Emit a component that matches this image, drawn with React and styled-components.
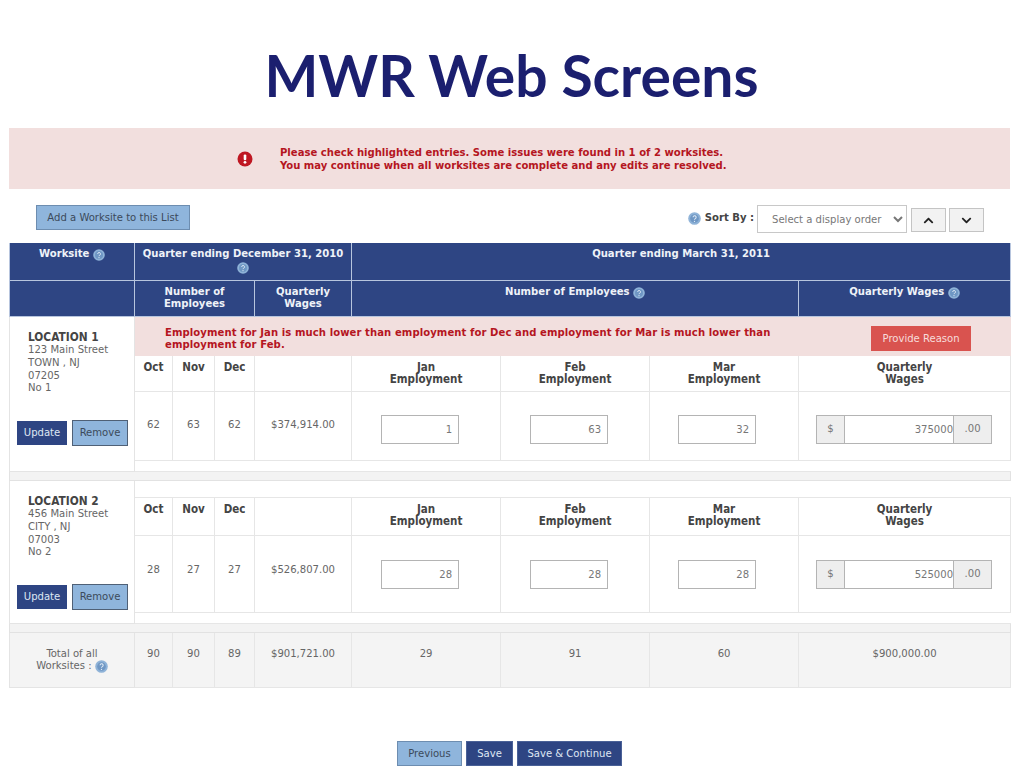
import React from "react";
import styled, { createGlobalStyle } from "styled-components";
import { FaChevronUp, FaChevronDown } from "react-icons/fa";

const GlobalStyle = createGlobalStyle`
  html, body {
    margin: 0;
    padding: 0;
    background: #fff;
  }
  body {
    font-family: "DejaVu Sans Condensed", "DejaVu Sans", sans-serif;
    font-size: 11.2px;
    line-height: 12.7px;
    color: #555;
  }
`;

const Page = styled.div`
  width: 1024px;
  height: 768px;
  overflow: hidden;
  padding: 0 14px 0 9px;
  box-sizing: border-box;
`;

const Title = styled.h1`
  margin: 0;
  height: 128px;
  display: flex;
  align-items: center;
  justify-content: center;
  padding: 22px 0 0 4px;
  box-sizing: border-box;
  font-family: Lato, "Noto Sans", sans-serif;
  font-size: 57px;
  font-weight: 700;
  color: #1b1f6f;
`;

const AlertBanner = styled.div`
  height: 61px;
  background: #f2dfde;
  display: flex;
  align-items: center;
  padding-left: 228px;
  gap: 27px;
  color: #b5161f;
  font-weight: 700;
`;

const AlertText = styled.div`
  padding-top: 3px;
`;

const Toolbar = styled.div`
  height: 54px;
  display: flex;
  align-items: flex-start;
  padding: 16px 26px 0 27px;
  box-sizing: border-box;
`;

const BaseButton = styled.button`
  font: inherit;
  height: 25px;
  padding: 2px 0 0;
  box-sizing: border-box;
  border: 1px solid #6d8db0;
  background: #8fb5dc;
  color: #3c4a5a;
  cursor: pointer;
`;

const AddButton = styled(BaseButton)`
  width: 154px;
`;

const SortGroup = styled.div`
  margin-left: auto;
  display: flex;
  align-items: flex-start;
`;

const SortLabel = styled.span`
  display: flex;
  align-items: center;
  gap: 4px;
  font-weight: 700;
  color: #444;
  margin: 7px 3px 0 0;
`;

const SortSelect = styled.select`
  width: 150px;
  height: 28px;
  font: inherit;
  color: #777;
  background: #fff;
  border: 1px solid #c8c8c8;
  padding-left: 10px;
`;

const ArrowButton = styled.button`
  width: 35px;
  height: 24px;
  margin: 3px 0 0 ${(p) => p.$gap}px;
  padding: 0;
  display: flex;
  align-items: center;
  justify-content: center;
  background: #f2f2f2;
  border: 1px solid #c4c4c4;
  color: #222;
`;

const Grid = styled.table`
  width: 1001px;
  table-layout: fixed;
  border-collapse: collapse;
`;

const HeadCell = styled.th`
  background: #2e4583;
  color: #eef2f8;
  height: ${(p) => p.$h}px;
  padding: 5px 4px 0;
  box-sizing: border-box;
  vertical-align: top;
  text-align: center;
  font-weight: 700;
  border: 1px solid #b7c5de;
  border-top: ${(p) => (p.$first ? "none" : "1px solid #b7c5de")};
`;

const LocationCell = styled.td`
  border: 1px solid #e4e4e4;
  padding: 0;
  vertical-align: top;
`;

const LocationBox = styled.div`
  display: flex;
  flex-direction: column;
  height: ${(p) => p.$h}px;
  box-sizing: border-box;
  padding: ${(p) => p.$top}px 6px 0 7px;
`;

const Address = styled.div`
  padding-left: 11px;
  color: #666;
  strong {
    display: block;
    font-size: 11.8px;
    margin-bottom: 1px;
    color: #444;
  }
`;

const ButtonRow = styled.div`
  margin-top: auto;
  margin-bottom: ${(p) => p.$bottom}px;
  display: flex;
  align-items: center;
  gap: 5px;
`;

const UpdateButton = styled(BaseButton)`
  width: 51px;
  height: 24px;
  background: #2e4583;
  border-color: #2e4583;
  color: #dfe7f3;
`;

const RemoveButton = styled(BaseButton)`
  width: 57px;
  height: 26px;
  border-color: #4f6076;
`;

const WarnCell = styled.td`
  height: 39px;
  box-sizing: border-box;
  padding: 0;
  vertical-align: top;
  background: #f2dfde;
  border: 1px solid #f2dfde;
`;

const WarnRow = styled.div`
  display: flex;
  align-items: flex-start;
  justify-content: space-between;
  padding: 9px 39px 0 30px;
  color: #b5161f;
  font-weight: 700;
`;

const WarnText = styled.div`
  width: 640px;
  margin-top: 1px;
  letter-spacing: 0.08px;
`;

const ReasonButton = styled(BaseButton)`
  width: 100px;
  font-weight: 400;
  background: #d9534f;
  border-color: #d9534f;
  color: #f7dcdb;
`;

const BlankCell = styled.td`
  height: ${(p) => p.$h}px;
  box-sizing: border-box;
  padding: 0;
  border: 1px solid #e6e6e6;
  border-left: none;
  border-right: none;
`;

const SubHead = styled.td`
  height: ${(p) => p.$h}px;
  box-sizing: border-box;
  padding: 5px 2px 0;
  vertical-align: top;
  text-align: center;
  font-size: 11.5px;
  font-weight: 700;
  color: #444;
  border: 1px solid #e6e6e6;
`;

const ValueCell = styled.td`
  height: ${(p) => p.$h}px;
  box-sizing: border-box;
  padding: ${(p) => p.$top}px 2px 0;
  vertical-align: top;
  text-align: center;
  color: #666;
  border: 1px solid #e6e6e6;
`;

const InputCell = styled.td`
  box-sizing: border-box;
  padding: ${(p) => p.$top}px 0 0 ${(p) => p.$left}px;
  vertical-align: top;
  border: 1px solid #e6e6e6;
`;

const NumberInput = styled.input`
  display: block;
  width: ${(p) => p.$w}px;
  height: 29px;
  box-sizing: border-box;
  font: inherit;
  text-align: right;
  color: #777;
  background: #fff;
  border: 1px solid #b4b4b4;
  padding: 0 6px 0 0;
  ${(p) => p.$joined && "padding-right: 0; border-left: none; border-right: none;"}
`;

const InputGroup = styled.div`
  display: flex;
  width: 176px;
`;

const Addon = styled.span`
  height: 29px;
  width: ${(p) => p.$w}px;
  box-sizing: border-box;
  display: flex;
  align-items: center;
  justify-content: center;
  background: #eee;
  border: 1px solid #b4b4b4;
  color: #777;
`;

const SeparatorCell = styled.td`
  height: 9px;
  box-sizing: border-box;
  padding: 0;
  background: #f3f3f3;
  border: 1px solid #e2e2e2;
`;

const TotalRow = styled.tr`
  background: #f4f4f4;
`;

const TotalLabel = styled.td`
  height: 55px;
  box-sizing: border-box;
  padding: 15px 2px 0;
  vertical-align: top;
  text-align: center;
  color: #666;
  border: 1px solid #e4e4e4;
`;

const Footer = styled.div`
  display: flex;
  justify-content: center;
  gap: 4px;
  margin-top: 53px;
`;

const PrevButton = styled(BaseButton)`
  width: 65px;
`;

const SaveButton = styled(BaseButton)`
  width: ${(p) => p.$w}px;
  background: #2e4583;
  border-color: #4a6197;
  color: #dfe7f3;
`;

const HelpSvg = styled.svg`
  vertical-align: -2px;
  margin: -2px 0;
  flex: none;
`;

function HelpIcon({ size = 12 }) {
  return (
    <HelpSvg width={size} height={size} viewBox="0 0 12 12">
      <circle cx="6" cy="6" r="5.8" fill="#8fb3d8" />
      <circle cx="6" cy="6" r="4" fill="#6f97c4" />
      <path d="M4.7 4.9a1.4 1.4 0 1 1 2.1 1.2c-.5.3-.8.5-.8 1" fill="none" stroke="#dfeaf5" strokeWidth="1" />
      <circle cx="6" cy="8.7" r=".6" fill="#dfeaf5" />
    </HelpSvg>
  );
}

function AlertIcon() {
  return (
    <svg width="16" height="16" viewBox="0 0 16 16">
      <circle cx="8" cy="8" r="7.5" fill="#bf1722" />
      <rect x="6.7" y="3.4" width="2.6" height="5.8" rx="1.2" fill="#fff" />
      <circle cx="8" cy="11.3" r="1.4" fill="#fff" />
    </svg>
  );
}

const MONTHS = ["Jan", "Feb", "Mar"];
const INPUT_LEFT = [29, 29, 28];

const LOCATIONS = [
  {
    name: "LOCATION 1",
    lines: ["123 Main Street", "TOWN , NJ", "07205", "No 1"],
    warning:
      "Employment for Jan is much lower than employment for Dec and employment for Mar is much lower than employment for Feb.",
    boxHeight: 154,
    boxTop: 14,
    buttonBottom: 25,
    subHeight: 36,
    valueHeight: 69,
    valueTop: 27,
    inputTop: 23,
    prior: ["62", "63", "62", "$374,914.00"],
    current: ["1", "63", "32"],
    wages: "375000",
  },
  {
    name: "LOCATION 2",
    lines: ["456 Main Street", "CITY , NJ", "07003", "No 2"],
    blankHeight: 17,
    boxHeight: 142,
    boxTop: 14,
    buttonBottom: 13,
    subHeight: 38,
    valueHeight: 77,
    valueTop: 28,
    inputTop: 24,
    prior: ["28", "27", "27", "$526,807.00"],
    current: ["28", "28", "28"],
    wages: "525000",
  },
];

function LocationRows({ loc }) {
  return (
    <>
      <tr>
        <LocationCell rowSpan={4}>
          <LocationBox $h={loc.boxHeight} $top={loc.boxTop}>
            <Address>
              <strong>{loc.name}</strong>
              {loc.lines.map((line) => (
                <div key={line}>{line}</div>
              ))}
            </Address>
            <ButtonRow $bottom={loc.buttonBottom}>
              <UpdateButton>Update</UpdateButton>
              <RemoveButton>Remove</RemoveButton>
            </ButtonRow>
          </LocationBox>
        </LocationCell>
        {loc.warning ? (
          <WarnCell colSpan={8}>
            <WarnRow>
              <WarnText>{loc.warning}</WarnText>
              <ReasonButton>Provide Reason</ReasonButton>
            </WarnRow>
          </WarnCell>
        ) : (
          <BlankCell colSpan={8} $h={loc.blankHeight} />
        )}
      </tr>
      <tr>
        {["Oct", "Nov", "Dec", ""].map((m, i) => (
          <SubHead key={i} $h={loc.subHeight}>
            {m}
          </SubHead>
        ))}
        {MONTHS.map((m) => (
          <SubHead key={m} $h={loc.subHeight}>
            {m}
            <br />
            Employment
          </SubHead>
        ))}
        <SubHead $h={loc.subHeight}>
          Quarterly
          <br />
          Wages
        </SubHead>
      </tr>
      <tr>
        {loc.prior.map((v, i) => (
          <ValueCell key={i} $h={loc.valueHeight} $top={loc.valueTop}>
            {v}
          </ValueCell>
        ))}
        {loc.current.map((v, i) => (
          <InputCell key={i} $top={loc.inputTop} $left={INPUT_LEFT[i]}>
            <NumberInput $w={78} value={v} readOnly />
          </InputCell>
        ))}
        <InputCell $top={loc.inputTop} $left={17}>
          <InputGroup>
            <Addon $w={29}>$</Addon>
            <NumberInput $w={108} $joined value={loc.wages} readOnly />
            <Addon $w={39}>.00</Addon>
          </InputGroup>
        </InputCell>
      </tr>
      <tr>
        <BlankCell colSpan={8} $h={10} />
      </tr>
      <tr>
        <SeparatorCell colSpan={9} />
      </tr>
    </>
  );
}

export default function App() {
  return (
    <Page>
      <GlobalStyle />
      <Title>MWR Web Screens</Title>
      <AlertBanner>
        <AlertIcon />
        <AlertText>
          Please check highlighted entries. Some issues were found in 1 of 2 worksites.
          <br />
          You may continue when all worksites are complete and any edits are resolved.
        </AlertText>
      </AlertBanner>
      <Toolbar>
        <AddButton>Add a Worksite to this List</AddButton>
        <SortGroup>
          <SortLabel>
            <HelpIcon size={13} />
            Sort By :
          </SortLabel>
          <SortSelect defaultValue="">
            <option value="">Select a display order</option>
          </SortSelect>
          <ArrowButton $gap={4}>
            <FaChevronUp size={11} />
          </ArrowButton>
          <ArrowButton $gap={3}>
            <FaChevronDown size={11} />
          </ArrowButton>
        </SortGroup>
      </Toolbar>
      <Grid>
        <colgroup>
          {[125, 38, 42, 40, 97, 149, 149, 149, 212].map((w, i) => (
            <col key={i} width={w} />
          ))}
        </colgroup>
        <thead>
          <tr>
            <HeadCell $h={37} $first>
              Worksite <HelpIcon />
            </HeadCell>
            <HeadCell $h={37} $first colSpan={4}>
              Quarter ending December 31, 2010
              <br />
              <HelpIcon />
            </HeadCell>
            <HeadCell $h={37} $first colSpan={4}>
              Quarter ending March 31, 2011
            </HeadCell>
          </tr>
          <tr>
            <HeadCell $h={36} />
            <HeadCell $h={36} colSpan={3}>
              Number of
              <br />
              Employees
            </HeadCell>
            <HeadCell $h={36}>
              Quarterly
              <br />
              Wages
            </HeadCell>
            <HeadCell $h={36} colSpan={3}>
              Number of Employees <HelpIcon />
            </HeadCell>
            <HeadCell $h={36}>
              Quarterly Wages <HelpIcon />
            </HeadCell>
          </tr>
        </thead>
        <tbody>
          {LOCATIONS.map((loc) => (
            <LocationRows key={loc.name} loc={loc} />
          ))}
          <TotalRow>
            <TotalLabel>
              Total of all
              <br />
              Worksites : <HelpIcon size={13} />
            </TotalLabel>
            {["90", "90", "89", "$901,721.00", "29", "91", "60", "$900,000.00"].map((v, i) => (
              <ValueCell key={i} $h={55} $top={15}>
                {v}
              </ValueCell>
            ))}
          </TotalRow>
        </tbody>
      </Grid>
      <Footer>
        <PrevButton>Previous</PrevButton>
        <SaveButton $w={47}>Save</SaveButton>
        <SaveButton $w={105}>Save &amp; Continue</SaveButton>
      </Footer>
    </Page>
  );
}
